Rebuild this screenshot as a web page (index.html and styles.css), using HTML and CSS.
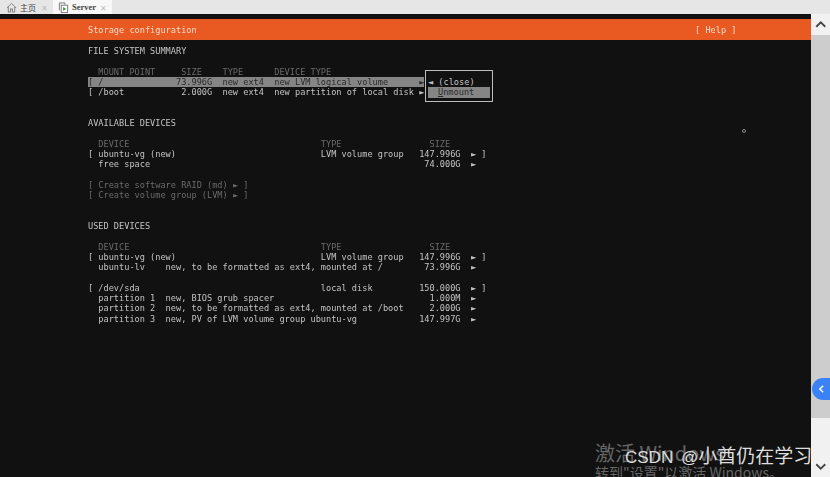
FILE: index.html
```html
<!DOCTYPE html>
<html lang="en">

<head>
  <meta charset="UTF-8">
  <title>Server</title>
  <link rel="stylesheet" href="styles.css">
</head>

<body>
  <div class="tabs">
    <div class="tab">
      <svg class="tab-icon" viewBox="0 0 12 12"><path d="M1 6.5 6 1.5l5 5M2.5 5.5V11h2.5V7.5h2V11h2.5V5.5" fill="none" stroke="#777" stroke-width="1"/></svg>
      <span class="tab-name">主页</span>
      <span class="tab-x">✕</span>
    </div>
    <div class="tab tab-active">
      <svg class="tab-icon" viewBox="0 0 12 12"><path d="M1.5 9V1h6v2" fill="none" stroke="#777"/><rect x="3.5" y="3.5" width="7" height="8" fill="#fff" stroke="#777"/><path d="M5.5 5.5v4l3.5-2z" fill="#3a9a3a"/></svg>
      <span class="tab-name tab-bold">Server</span>
      <span class="tab-x">✕</span>
    </div>
  </div>
  <div class="main">
    <div class="screen">
      <div class="title-bar"><span>Storage configuration</span><span class="help">[ Help ]</span></div>
      <div class="content">
        <div class="line">FILE SYSTEM SUMMARY</div>
        <div class="line"> </div>
        <div class="line dim">  MOUNT POINT     SIZE    TYPE      DEVICE TYPE</div>
        <div class="line picked">[ /              73.996G  new ext4  new LVM logical volume      <span class="tri">►</span></div>
        <div class="line">[ /boot           2.000G  new ext4  new partition of local disk <span class="tri">►</span></div>
        <div class="line"> </div>
        <div class="line"> </div>
        <div class="line">AVAILABLE DEVICES</div>
        <div class="line"> </div>
        <div class="line dim">  DEVICE                                     TYPE                 SIZE</div>
        <div class="line">[ ubuntu-vg (new)                            LVM volume group   147.996G  <span class="tri">►</span> ]</div>
        <div class="line">  free space                                                     74.000G  <span class="tri">►</span></div>
        <div class="line"> </div>
        <div class="line dim">[ Create software RAID (md) <span class="tri">►</span> ]</div>
        <div class="line dim">[ Create volume group (LVM) <span class="tri">►</span> ]</div>
        <div class="line"> </div>
        <div class="line"> </div>
        <div class="line">USED DEVICES</div>
        <div class="line"> </div>
        <div class="line dim">  DEVICE                                     TYPE                 SIZE</div>
        <div class="line">[ ubuntu-vg (new)                            LVM volume group   147.996G  <span class="tri">►</span> ]</div>
        <div class="line">  ubuntu-lv    new, to be formatted as ext4, mounted at /        73.996G  <span class="tri">►</span></div>
        <div class="line"> </div>
        <div class="line">[ /dev/sda                                   local disk         150.000G  <span class="tri">►</span> ]</div>
        <div class="line">  partition 1  new, BIOS grub spacer                              1.000M  <span class="tri">►</span></div>
        <div class="line">  partition 2  new, to be formatted as ext4, mounted at /boot     2.000G  <span class="tri">►</span></div>
        <div class="line">  partition 3  new, PV of LVM volume group ubuntu-vg            147.997G  <span class="tri">►</span></div>
      </div>
      <div class="menu">
        <div class="line"><span class="tri">◄</span> (close)</div>
        <div class="line menu-picked"><u>U</u>nmount</div>
      </div>
      <div class="cursor"></div>
      <div class="watermark">
        <div class="activate">激活 Windows</div>
        <div class="activate-sub">转到"设置"以激活 Windows。</div>
      </div>
    </div>
    <div class="scrollbar">
      <svg class="arrow" viewBox="0 0 12 8"><path d="M2 6 6 2l4 4" fill="none" stroke="#444" stroke-width="1.6"/></svg>
      <div class="thumb"></div>
      <div class="track"></div>
      <svg class="arrow" viewBox="0 0 12 8"><path d="M2 2l4 4 4-4" fill="none" stroke="#444" stroke-width="1.6"/></svg>
    </div>
    <div class="side-btn">
      <svg viewBox="0 0 8 12"><path d="M6 2 2 6l4 4" fill="none" stroke="#fff" stroke-width="1.8"/></svg>
    </div>
    <div class="csdn">CSDN @<span class="csdn-name">小酋仍在学习</span></div>
  </div>
</body>

</html>
```
FILE: styles.css
```css
* {
  box-sizing: border-box;
}

body {
  margin: 0;
  width: 830px;
  height: 477px;
  overflow: hidden;
  display: flex;
  flex-direction: column;
  background: #111;
  font-family: "DejaVu Sans Mono", "Liberation Mono", monospace;
}

.tabs {
  height: 14px;
  flex: none;
  display: flex;
  background: #e6e6e6;
  font-family: "Noto Sans CJK SC", "Liberation Sans", sans-serif;
  color: #444;
}

.tab {
  width: 53px;
  display: flex;
  align-items: center;
  gap: 3px;
  padding-left: 6px;
  font-size: 8px;
}

.tab-active {
  width: 59px;
  background: #f8f8f8;
  padding-left: 5px;
}

.tab-icon {
  width: 11px;
  height: 11px;
  flex: none;
}

.tab-name {
  flex: 1;
}

.tab-bold {
  font-weight: bold;
  font-family: "Liberation Serif", serif;
  font-size: 8.5px;
}

.tab-x {
  color: #bbb;
  margin-right: 5px;
}

.main {
  flex: 1;
  display: flex;
  position: relative;
}

.screen {
  width: 811px;
  position: relative;
  background: #111;
  padding-top: 5px;
  overflow: hidden;
}

.title-bar {
  height: 21px;
  background: #e85a22;
  color: #f6d9c8;
  display: flex;
  justify-content: space-between;
  align-items: center;
  padding: 0 74px 0 88px;
  font-size: 8.6px;
  white-space: pre;
  filter: blur(0.3px);
}

.content {
  padding: 6px 0 0 88px;
  color: #c4c4c4;
  font-size: 8.6px;
  filter: blur(0.3px);
}

.line {
  height: 10.3px;
  line-height: 10.3px;
  white-space: pre;
}

/* the arrows come from a fallback font, keep them on the character grid */
.tri {
  display: inline-block;
  width: 1ch;
  text-align: center;
}

.dim {
  color: #6a6a6a;
}

.picked {
  background: #858585;
  color: #2a2a2a;
  width: 336px;
}

.menu {
  position: absolute;
  left: 425px;
  top: 56px;
  width: 68px;
  height: 32px;
  border: 1px solid #bdbdbd;
  background: #111;
  padding: 6px 2px 0;
  color: #c4c4c4;
  font-size: 8.6px;
}

.menu-picked {
  background: #858585;
  color: #2a2a2a;
  padding-left: 10px;
}

.cursor {
  position: absolute;
  left: 742px;
  top: 115px;
  width: 4px;
  height: 4px;
  border: 1px solid #8a8a8a;
  border-radius: 50%;
}

.watermark {
  position: absolute;
  left: 595px;
  top: 426px;
  color: #666;
  font-family: "Noto Sans CJK SC", sans-serif;
  white-space: nowrap;
}

.activate {
  font-size: 20px;
  line-height: 25px;
}

.activate-sub {
  font-size: 14px;
  line-height: 15px;
}

.csdn {
  position: absolute;
  left: 625px;
  top: 431px;
  color: #ddd;
  font-size: 17px;
  line-height: 24px;
  word-spacing: 3px;
  white-space: nowrap;
  font-family: "Liberation Sans", "Noto Sans CJK SC", sans-serif;
}

.csdn-name {
  font-size: 19px;
}

.scrollbar {
  flex: 1;
  display: flex;
  flex-direction: column;
  background: #f1f1f1;
}

.arrow {
  flex: none;
  height: 21px;
  padding: 6px 3px;
}

.thumb {
  height: 383px;
  background: #cdcdcd;
}

.track {
  flex: 1;
}

.side-btn {
  position: absolute;
  right: 0;
  top: 364px;
  width: 18px;
  height: 22px;
  border-radius: 11px 0 0 11px;
  background: #3b82f6;
  display: flex;
  align-items: center;
  justify-content: center;
}

.side-btn svg {
  width: 7px;
  height: 10px;
}
```
